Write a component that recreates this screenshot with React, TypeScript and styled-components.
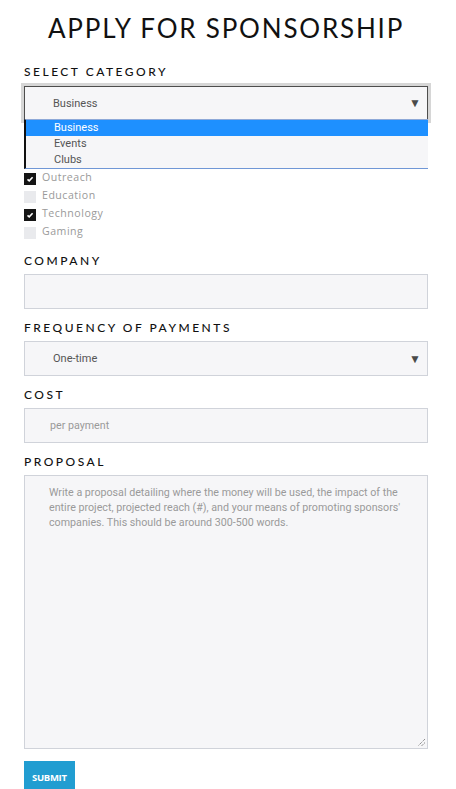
import React from "react";
import styled, { createGlobalStyle } from "styled-components";

const GlobalStyle = createGlobalStyle`
  html, body { margin: 0; padding: 0; background: #ffffff; }
  * { box-sizing: border-box; }
`;

const Page = styled.div`
  width: 456px;
  padding: 11px 28px 0 24px;
`;

const Title = styled.h1`
  margin: 0 0 19px;
  text-align: center;
  font-family: "Lato", "Open Sans", sans-serif;
  font-weight: 400;
  font-size: 26px;
  line-height: 34px;
  letter-spacing: 1.8px;
  color: #111;
`;

const Label = styled.div`
  font-family: "Lato", "Open Sans", sans-serif;
  font-weight: 500;
  font-size: 12px;
  line-height: 16px;
  letter-spacing: 2.5px;
  color: #111;
  margin: 11px 0 5px;
`;

const FirstLabel = styled(Label)`
  margin-top: 0;
  margin-bottom: 6px;
`;

const SelectArea = styled.div`
  position: relative;
  margin-bottom: 48px;
`;

const SelectBox = styled.div<{ $focused?: boolean }>`
  display: flex;
  align-items: center;
  justify-content: space-between;
  height: ${(p) => (p.$focused ? "34px" : "35px")};
  padding: 0 6px 0 28px;
  background: #f6f6f8;
  border: 1px solid ${(p) => (p.$focused ? "#4d4d4d" : "#d0d3da")};
  box-shadow: ${(p) => (p.$focused ? "0 0 0 3px #d6d6d6" : "none")};
  font-family: "Roboto", "Open Sans", sans-serif;
  font-size: 11px;
  color: #555;
`;

const Arrow = styled.span`
  font-size: 12px;
  color: #4a4a4a;
`;

const Dropdown = styled.ul`
  position: absolute;
  left: 0;
  right: 0;
  top: 33px;
  margin: 0;
  padding: 0;
  list-style: none;
  background: #f6f6f8;
  border-top: 1px solid #8ea9d8;
  border-bottom: 1px solid #7097d6;
  border-left: 2px solid #111;
`;

const Option = styled.li<{ $active?: boolean }>`
  height: 16px;
  line-height: 16px;
  padding-left: 28px;
  font-family: "Roboto", "Open Sans", sans-serif;
  font-size: 11px;
  color: ${(p) => (p.$active ? "#ffffff" : "#555")};
  background: ${(p) => (p.$active ? "#1e90ff" : "transparent")};
`;

const CheckList = styled.div`
  display: flex;
  flex-direction: column;
  margin-bottom: 13px;
`;

const CheckRow = styled.div`
  display: flex;
  align-items: center;
  height: 18px;
  gap: 6px;
`;

const Box = styled.span<{ $checked?: boolean }>`
  display: flex;
  align-items: center;
  justify-content: center;
  width: 12px;
  height: 12px;
  margin-top: 3px;
  background: ${(p) => (p.$checked ? "#151515" : "#e9eaed")};
`;

const CheckText = styled.span`
  font-family: "Open Sans", sans-serif;
  font-size: 10.6px;
  letter-spacing: 0.5px;
  color: #9a9a9a;
`;

const TextInput = styled.div`
  height: 35px;
  display: flex;
  align-items: center;
  padding-left: 25px;
  background: #f6f6f8;
  border: 1px solid #d0d3da;
  font-family: "Roboto", "Open Sans", sans-serif;
  font-size: 10.7px;
  color: #9a9a9a;
`;

const TextArea = styled.div`
  position: relative;
  height: 274px;
  padding: 9px 10px 0 24px;
  background: #f6f6f8;
  border: 1px solid #d0d3da;
  font-family: "Roboto", "Open Sans", sans-serif;
  font-size: 10.7px;
  line-height: 15px;
  color: #9a9a9a;
`;

const Grip = styled.svg`
  position: absolute;
  right: 1px;
  bottom: 1px;
`;

const Submit = styled.button`
  margin-top: 12px;
  height: 32px;
  padding: 0 8px;
  border: none;
  background: #219dd1;
  color: #fff;
  font-family: "Open Sans", sans-serif;
  font-weight: 700;
  font-size: 9.5px;
  letter-spacing: -0.3px;
`;

const Check = () => (
  <svg width="8" height="8" viewBox="0 0 8 8">
    <path d="M1.5 4.3 L3.2 5.8 L6.6 2.2" stroke="#fff" strokeWidth="1.6" fill="none" />
  </svg>
);

const cats = [
  { name: "Outreach", checked: true },
  { name: "Education", checked: false },
  { name: "Technology", checked: true },
  { name: "Gaming", checked: false },
];

export default function App() {
  return (
    <>
      <GlobalStyle />
      <Page>
        <Title>APPLY FOR SPONSORSHIP</Title>
        <FirstLabel>SELECT CATEGORY</FirstLabel>
        <SelectArea>
          <SelectBox $focused>
            <span>Business</span>
            <Arrow>▼</Arrow>
          </SelectBox>
          <Dropdown>
            <Option $active>Business</Option>
            <Option>Events</Option>
            <Option>Clubs</Option>
          </Dropdown>
        </SelectArea>
        <CheckList>
          {cats.map((c) => (
            <CheckRow key={c.name}>
              <Box $checked={c.checked}>{c.checked && <Check />}</Box>
              <CheckText>{c.name}</CheckText>
            </CheckRow>
          ))}
        </CheckList>
        <Label>COMPANY</Label>
        <TextInput />
        <Label>FREQUENCY OF PAYMENTS</Label>
        <SelectBox>
          <span>One-time</span>
          <Arrow>▼</Arrow>
        </SelectBox>
        <Label>COST</Label>
        <TextInput>per payment</TextInput>
        <Label>PROPOSAL</Label>
        <TextArea>
          Write a proposal detailing where the money will be used, the impact of the entire project,
          projected reach (#), and your means of promoting sponsors' companies. This should be around
          300-500 words.
          <Grip width="9" height="9" viewBox="0 0 9 9">
            <path d="M8 1 L1 8 M8 4.5 L4.5 8" stroke="#666" strokeWidth="1" strokeDasharray="1 1" />
          </Grip>
        </TextArea>
        <Submit>SUBMIT</Submit>
      </Page>
    </>
  );
}
